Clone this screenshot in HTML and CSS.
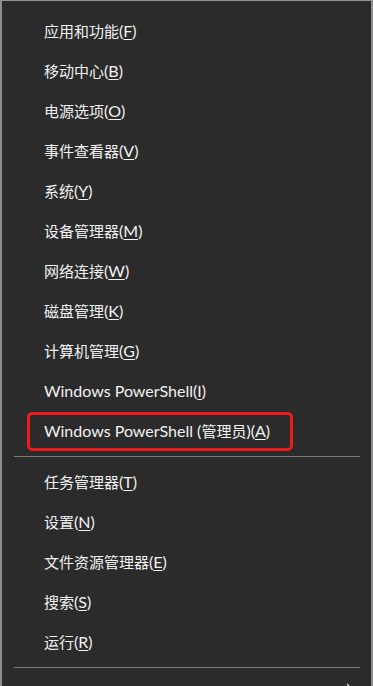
FILE: index.html
```html
<!DOCTYPE html>
<html lang="zh-CN">
<head>
<meta charset="utf-8">
<link rel="stylesheet" href="styles.css">
</head>
<body>
<div class="menu">
  <div class="item"><span class="zh">应用和功能</span>(<u>F</u>)</div>
  <div class="item"><span class="zh">移动中心</span>(<u>B</u>)</div>
  <div class="item"><span class="zh">电源选项</span>(<u>O</u>)</div>
  <div class="item"><span class="zh">事件查看器</span>(<u>V</u>)</div>
  <div class="item"><span class="zh">系统</span>(<u>Y</u>)</div>
  <div class="item"><span class="zh">设备管理器</span>(<u>M</u>)</div>
  <div class="item"><span class="zh">网络连接</span>(<u>W</u>)</div>
  <div class="item"><span class="zh">磁盘管理</span>(<u>K</u>)</div>
  <div class="item"><span class="zh">计算机管理</span>(<u>G</u>)</div>
  <div class="item">Windows PowerShell(<u>I</u>)</div>
  <div class="item marked">Windows PowerShell (<span class="zh">管理员</span>)(<u>A</u>)<span class="highlight"></span></div>
  <div class="sep"></div>
  <div class="item"><span class="zh">任务管理器</span>(<u>T</u>)</div>
  <div class="item"><span class="zh">设置</span>(<u>N</u>)</div>
  <div class="item"><span class="zh">文件资源管理器</span>(<u>E</u>)</div>
  <div class="item"><span class="zh">搜索</span>(<u>S</u>)</div>
  <div class="item"><span class="zh">运行</span>(<u>R</u>)</div>
  <div class="sep"></div>
  <div class="item sub"><svg class="chev" width="8" height="14" viewBox="0 0 8 14"><path d="M1 1 L7 7 L1 13" fill="none" stroke="#e8e8e8" stroke-width="1.2"/></svg></div>
</div>
</body>
</html>
```

FILE: styles.css
```css
html, body {
  margin: 0;
  padding: 0;
  background: #2b2b2b;
}
.menu {
  box-sizing: border-box;
  width: 373px;
  height: 686px;
  overflow: hidden;
  background: #2b2b2b;
  border-top: 1px solid #8f8f8f;
  border-left: 2px solid #8f8f8f;
  border-right: 2px solid #8f8f8f;
  padding-top: 10px;
  font-family: "Lato", "Noto Sans CJK SC", sans-serif;
  font-size: 16px;
  color: #f2f2f2;
}
.item {
  position: relative;
  height: 40px;
  line-height: 40px;
  padding-left: 42px;
  white-space: nowrap;
}
.zh {
  font-family: "Noto Sans CJK SC", sans-serif;
  font-size: 15px;
}
.item u {
  text-decoration-thickness: 1px;
  text-underline-offset: 2px;
}
.sep {
  height: 1px;
  background: #7a7a7a;
  margin: 5px 11px 5px 12px;
}
.highlight {
  position: absolute;
  left: 25px;
  top: 1px;
  width: 266px;
  height: 39px;
  box-sizing: border-box;
  border: 3px solid #ec1c1c;
  border-radius: 5px;
}
.chev {
  position: absolute;
  right: 17px;
  top: 10px;
}
```
